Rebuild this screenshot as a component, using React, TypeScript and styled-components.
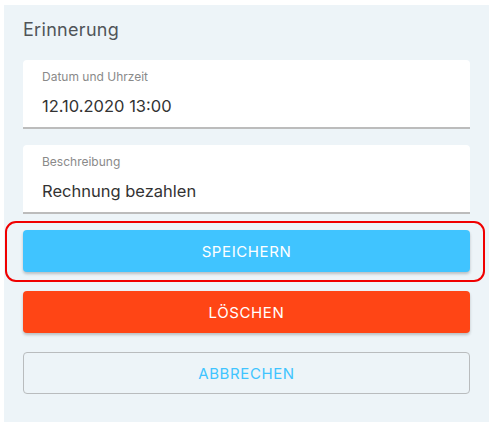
import React from 'react';
import styled, { createGlobalStyle } from 'styled-components';

const GlobalStyle = createGlobalStyle`
    html, body {
        margin: 0;
        padding: 0;
        background: #ffffff;
        font-family: Inter, Roboto, "Liberation Sans", Arial, sans-serif;
    }
`;

const Panel = styled.div`
    box-sizing: border-box;
    width: 485px;
    height: 417px;
    margin: 5px 0 0 4px;
    padding: 15px 19px 28px 19px;
    background-color: #edf4f8;
    display: flex;
    flex-direction: column;
`;

const Title = styled.div`
    font-size: 18px;
    line-height: 20px;
    font-weight: 400;
    letter-spacing: 0.3px;
    color: #505458;
    margin-bottom: 20px;
`;

const Field = styled.div<{ gap?: number }>`
    box-sizing: border-box;
    height: 69px;
    padding: 10px 19px 0 19px;
    background-color: #ffffff;
    border-radius: 4px 4px 0 0;
    border-bottom: 2px solid #bcbcbc;
    margin-bottom: ${(props) => props.gap ?? 0}px;
`;

const Label = styled.div`
    font-size: 12px;
    line-height: 14px;
    color: #8a8a8a;
    margin-bottom: 12px;
`;

const Value = styled.div`
    font-size: 16.5px;
    line-height: 20px;
    color: #333333;
`;

const Highlight = styled.div`
    margin: 7px -15px 9px -18px;
    padding: 7px 13px 8px 16px;
    border: 2px solid #f00000;
    border-radius: 11px;
`;

const Button = styled.button<{ variant: 'primary' | 'danger' | 'outline' }>`
    box-sizing: border-box;
    width: 100%;
    height: 42px;
    border-radius: 4px;
    font-family: inherit;
    font-size: 15px;
    font-weight: 400;
    letter-spacing: 0.6px;
    text-transform: uppercase;
    cursor: pointer;
    display: flex;
    align-items: center;
    justify-content: center;
    border: ${(props) => (props.variant === 'outline' ? '1px solid #b9bcbe' : 'none')};
    background-color: ${(props) =>
        props.variant === 'primary' ? '#40c4ff' : props.variant === 'danger' ? '#ff4515' : 'transparent'};
    color: ${(props) => (props.variant === 'outline' ? '#40c4ff' : '#ffffff')};
    box-shadow: ${(props) => (props.variant === 'outline' ? 'none' : '0 2px 3px rgba(0, 0, 0, 0.22)')};
`;

const Spacer = styled.div`
    height: 19px;
    flex-shrink: 0;
`;

const App: React.FC = () => {
    return (
        <>
            <GlobalStyle />
            <Panel>
                <Title>Erinnerung</Title>
                <Field gap={16}>
                    <Label>Datum und Uhrzeit</Label>
                    <Value>12.10.2020 13:00</Value>
                </Field>
                <Field>
                    <Label>Beschreibung</Label>
                    <Value>Rechnung bezahlen</Value>
                </Field>
                <Highlight>
                    <Button variant="primary">Speichern</Button>
                </Highlight>
                <Button variant="danger">Löschen</Button>
                <Spacer />
                <Button variant="outline">Abbrechen</Button>
            </Panel>
        </>
    );
};

export default App;
